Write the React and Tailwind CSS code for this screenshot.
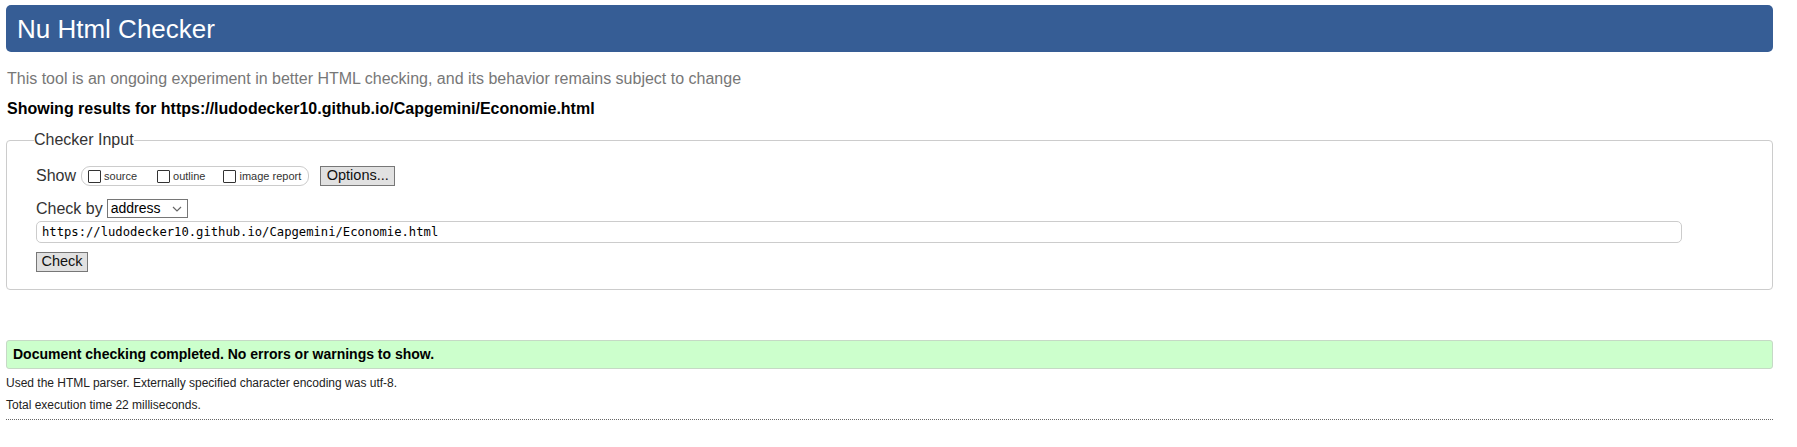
export default function App() {
  return (
    <div className="min-h-[447px] bg-white pl-[6px] pr-[24px] pt-[5px] font-['Liberation_Sans',Arial,sans-serif] text-[#222]">
      {/* Title bar */}
      <h1 className="flex h-[47px] items-center rounded-[5px] bg-[#365d95] px-[11px] text-[26px] leading-none text-white">
        Nu Html Checker
      </h1>

      <p className="mt-[18px] pl-[1px] text-[16px] leading-[18px] text-[#777]">
        This tool is an ongoing experiment in better HTML checking, and its behavior remains subject to change
      </p>
      <p className="mt-[12px] pl-[1px] text-[16px] font-bold leading-[18px] text-black">
        Showing results for https://ludodecker10.github.io/Capgemini/Economie.html
      </p>

      {/* Checker input */}
      <fieldset className="mt-[13px] rounded-[4px] border border-[#ccc] pb-[17px] pl-[29px]">
        <legend className="-ml-[2px] px-[0px] text-[16px] leading-[18px] text-[#333]">Checker Input</legend>

        <div className="mt-[17px] flex h-[20px] items-center text-[#333]">
          <span className="text-[16px]">Show</span>
          <div className="ml-[5px] flex h-[20px] items-center rounded-[9px] border border-[#ccc] pl-[6px] pr-[7px] text-[11px]">
            <span className="h-[13px] w-[13px] rounded-[1px] border border-[#333] bg-white" />
            <span className="ml-[3px]">source</span>
            <span className="ml-[20px] h-[13px] w-[13px] rounded-[1px] border border-[#333] bg-white" />
            <span className="ml-[3px]">outline</span>
            <span className="ml-[18px] h-[13px] w-[13px] rounded-[1px] border border-[#333] bg-white" />
            <span className="ml-[3px]">image report</span>
          </div>
          <button className="ml-[11px] flex h-[20px] w-[75px] items-center justify-center border border-[#777] bg-[#e1e1e1] text-[14.5px] text-[#111]">
            Options...
          </button>
        </div>

        <div className="mt-[13px] flex h-[19px] items-center text-[#333]">
          <span className="text-[16px]">Check by</span>
          <div className="ml-[4px] flex h-[19px] w-[81px] items-center justify-between border border-[#767676] bg-white pl-[3px] pr-[5px] text-[14px] text-black">
            <span>address</span>
            <svg width="10" height="6" viewBox="0 0 10 6" fill="none" stroke="#666" strokeWidth="1.2">
              <path d="M1 1l4 4 4-4" />
            </svg>
          </div>
        </div>

        <div className="mt-[3px] flex h-[22px] w-[1646px] items-center rounded-[5px] border border-[#ccc] bg-white pl-[5px] font-['DejaVu_Sans_Mono',monospace] text-[12.2px] text-black">
          https://ludodecker10.github.io/Capgemini/Economie.html
        </div>

        <button className="mt-[9px] flex h-[20px] w-[52px] items-center justify-center border border-[#777] bg-[#e1e1e1] text-[14.5px] text-[#111]">
          Check
        </button>
      </fieldset>

      {/* Result */}
      <div className="mt-[50px] flex h-[29px] items-center rounded-[3px] border border-[#c6d9c6] bg-[#ccffcc] pl-[6px] text-[14px] font-bold text-black">
        Document checking completed. No errors or warnings to show.
      </div>
      <p className="mt-[7px] text-[12px] leading-[14px] text-[#222]">
        Used the HTML parser. Externally specified character encoding was utf-8.
      </p>
      <p className="mt-[8px] text-[12px] leading-[14px] text-[#222]">Total execution time 22 milliseconds.</p>
      <div className="mt-[7px] border-t border-dotted border-[#666]" />
    </div>
  );
}
